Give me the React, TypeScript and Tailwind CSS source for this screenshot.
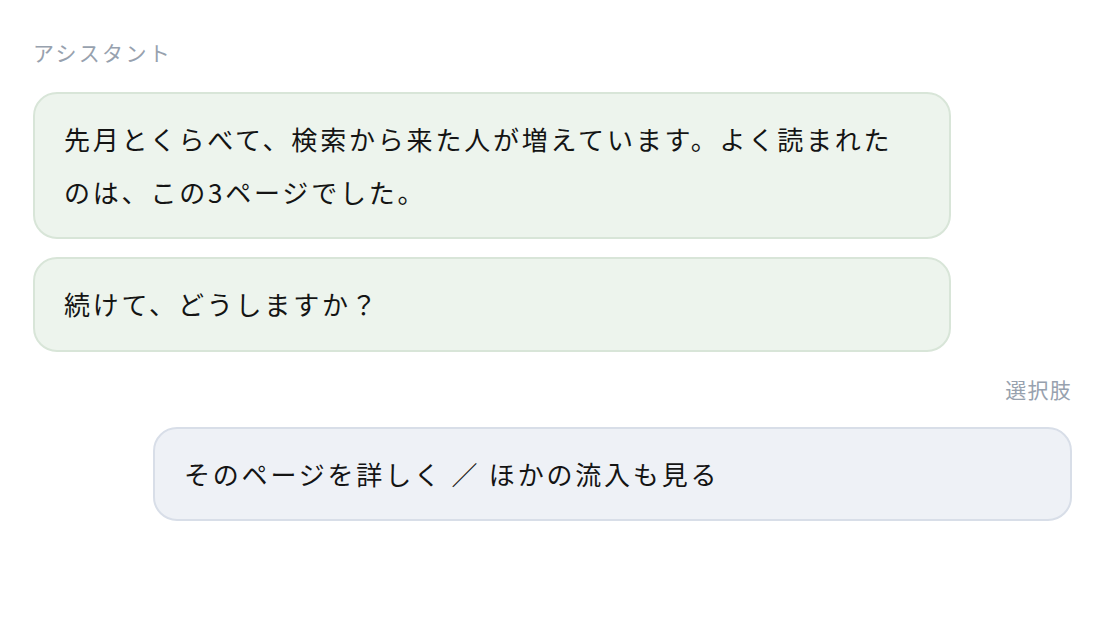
export default function App() {
  return (
    <div
      className="min-h-screen bg-white px-[33px] pt-[37px] pr-[32px] text-[#141414]"
      style={{ fontFamily: '"Noto Sans CJK JP", "Noto Sans", sans-serif' }}
    >
      {/* ASSISTANT */}
      <div className="text-[21px] leading-[30px] tracking-[0.11em] text-[#97a1ae]">
        アシスタント
      </div>

      <div className="mt-[25px] flex flex-col gap-[18px]">
        <div className="w-[918px] rounded-[24px] border-2 border-[#d8e5d8] bg-[#edf4ed] px-[29px] py-[19px] text-[26px] leading-[52.5px] tracking-[0.108em]">
          先月とくらべて、検索から来た人が増えています。よく読まれたのは、この3ページでした。
        </div>
        <div className="w-[918px] rounded-[24px] border-2 border-[#d8e5d8] bg-[#edf4ed] px-[29px] py-[19px] text-[26px] leading-[52.5px] tracking-[0.108em]">
          続けて、どうしますか？
        </div>
      </div>

      {/* CHOICES */}
      <div className="mt-[22px] text-right text-[21px] leading-[30px] tracking-[0.06em] text-[#97a1ae]">
        選択肢
      </div>

      <div className="mt-[23px] flex justify-end">
        <div className="w-[919px] rounded-[24px] border-2 border-[#d8dee8] bg-[#eef1f6] px-[29px] py-[19px] text-[26px] leading-[52.5px] tracking-[0.108em]">
          そのページを詳しく ／ ほかの流入も見る
        </div>
      </div>
    </div>
  );
}
